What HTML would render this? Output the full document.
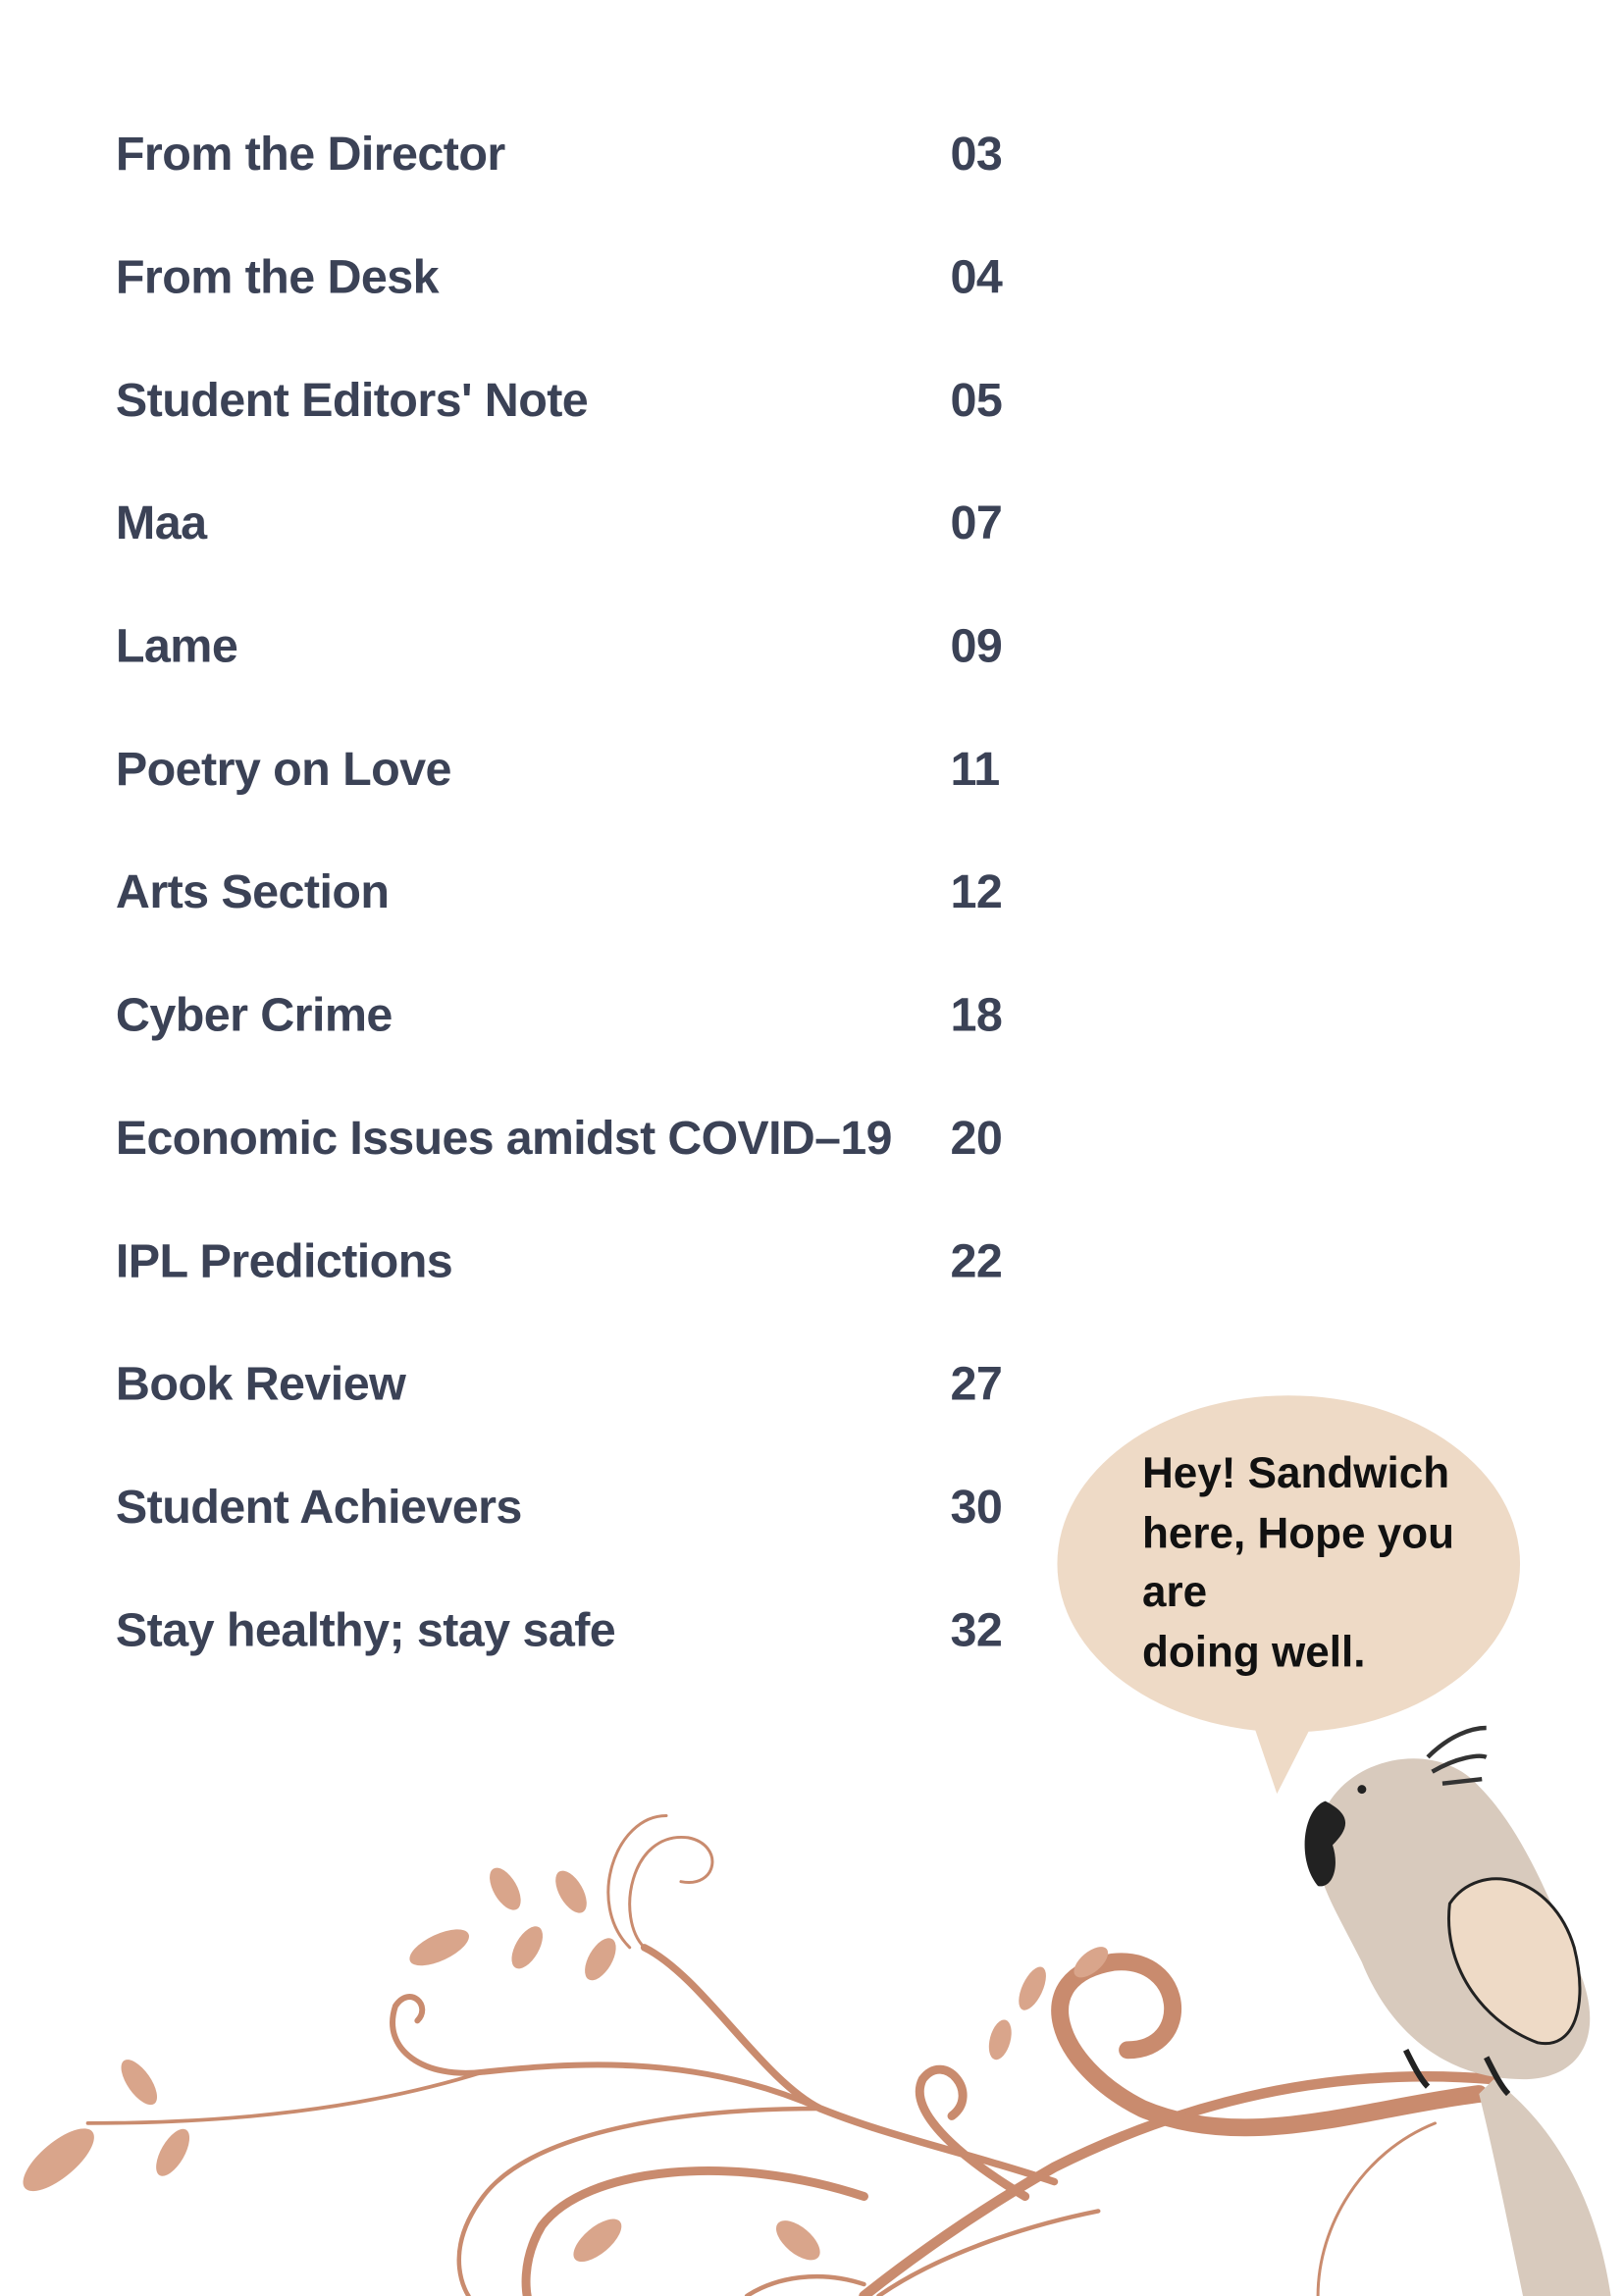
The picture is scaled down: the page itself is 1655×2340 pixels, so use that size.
<!DOCTYPE html>
<html><head><meta charset="utf-8"><style>
html,body{margin:0;padding:0;background:#fff;}
svg{display:block}
</style></head><body>
<svg width="1655" height="2340" viewBox="0 0 1109 1568" xmlns="http://www.w3.org/2000/svg">
<rect width="1109" height="1568" fill="#fff"/>
<g font-family="Liberation Sans, sans-serif" font-size="32.5" fill="#3b4256" font-weight="bold" style="letter-spacing:-0.4px">
<text x="79" y="116">From the Director</text><text x="649" y="116">03</text>
<text x="79" y="200">From the Desk</text><text x="649" y="200">04</text>
<text x="79" y="284">Student Editors' Note</text><text x="649" y="284">05</text>
<text x="79" y="368">Maa</text><text x="649" y="368">07</text>
<text x="79" y="452">Lame</text><text x="649" y="452">09</text>
<text x="79" y="536">Poetry on Love</text><text x="649" y="536">11</text>
<text x="79" y="620">Arts Section</text><text x="649" y="620">12</text>
<text x="79" y="704">Cyber Crime</text><text x="649" y="704">18</text>
<text x="79" y="788" textLength="530" lengthAdjust="spacingAndGlyphs">Economic Issues  amidst COVID–19</text><text x="649" y="788">20</text>
<text x="79" y="872">IPL Predictions</text><text x="649" y="872">22</text>
<text x="79" y="956">Book Review</text><text x="649" y="956">27</text>
<text x="79" y="1040">Student Achievers</text><text x="649" y="1040">30</text>
<text x="79" y="1124">Stay healthy; stay safe</text><text x="649" y="1124">32</text>
</g>
<!-- bubble -->
<ellipse cx="880" cy="1068" rx="158" ry="115" fill="#eedac6"/>
<path d="M855 1175 L872 1225 L900 1170 Z" fill="#eedac6"/>
<g font-family="Liberation Sans, sans-serif" font-size="29.5" font-weight="bold" fill="#111">
<text x="780" y="1016">Hey! Sandwich</text>
<text x="780" y="1057">here, Hope you</text>
<text x="780" y="1097">are</text>
<text x="780" y="1138">doing well.</text>
</g>
<!-- vines -->
<g fill="none" stroke="#c98b6e" stroke-linecap="round">
<path d="M1020 1420 C900 1410 800 1440 720 1480 C650 1520 600 1560 590 1568" stroke-width="7"/>
<path d="M1010 1430 C930 1440 850 1470 780 1440 C720 1410 700 1350 760 1340 C810 1335 815 1400 770 1400" stroke-width="12"/>
<path d="M720 1490 C660 1470 610 1460 560 1440 C520 1420 480 1350 440 1330" stroke-width="5"/>
<path d="M440 1330 C420 1310 430 1250 470 1255 C495 1260 490 1290 465 1285" stroke-width="2"/>
<path d="M430 1330 C400 1300 420 1240 455 1240" stroke-width="2"/>
<path d="M560 1440 C470 1400 380 1410 330 1415 C290 1420 260 1400 270 1370 C280 1355 295 1370 285 1380" stroke-width="4"/>
<path d="M330 1415 C250 1440 160 1450 60 1450" stroke-width="2.5"/>
<path d="M560 1440 C450 1440 360 1460 330 1500 C300 1540 320 1568 320 1568" stroke-width="3"/>
<path d="M590 1500 C500 1470 400 1480 370 1520 C355 1545 360 1568 360 1568" stroke-width="6"/>
<path d="M700 1500 C650 1470 620 1440 630 1420 C645 1400 670 1430 650 1445" stroke-width="6"/>
<path d="M600 1568 C640 1540 700 1520 750 1510" stroke-width="3"/>
<path d="M900 1568 C900 1520 930 1470 980 1450" stroke-width="2"/>
<path d="M510 1568 C530 1555 560 1550 590 1560" stroke-width="3"/>
</g>
<g fill="#d9a58b">
<ellipse cx="300" cy="1330" rx="22" ry="9" transform="rotate(-25 300 1330)"/>
<ellipse cx="345" cy="1290" rx="16" ry="8" transform="rotate(60 345 1290)"/>
<ellipse cx="390" cy="1292" rx="16" ry="8" transform="rotate(60 390 1292)"/>
<ellipse cx="360" cy="1330" rx="16" ry="8" transform="rotate(-60 360 1330)"/>
<ellipse cx="410" cy="1338" rx="16" ry="8" transform="rotate(-60 410 1338)"/>
<ellipse cx="40" cy="1475" rx="30" ry="12" transform="rotate(-40 40 1475)"/>
<ellipse cx="95" cy="1422" rx="18" ry="8" transform="rotate(55 95 1422)"/>
<ellipse cx="118" cy="1470" rx="18" ry="8" transform="rotate(-60 118 1470)"/>
<ellipse cx="705" cy="1358" rx="16" ry="7" transform="rotate(-65 705 1358)"/>
<ellipse cx="745" cy="1340" rx="14" ry="7" transform="rotate(-40 745 1340)"/>
<ellipse cx="683" cy="1393" rx="14" ry="7" transform="rotate(-75 683 1393)"/>
<ellipse cx="408" cy="1530" rx="20" ry="9" transform="rotate(-40 408 1530)"/>
<ellipse cx="545" cy="1530" rx="18" ry="9" transform="rotate(40 545 1530)"/>
</g>
<!-- bird -->
<g>
<path d="M1020 1420 C1060 1450 1090 1500 1100 1568 L1040 1568 C1030 1520 1020 1470 1010 1430 Z" fill="#d8cabd"/>
<path d="M900 1250 C910 1200 980 1185 1010 1220 C1040 1250 1060 1300 1080 1350 C1095 1390 1080 1420 1040 1420 C990 1420 950 1390 930 1340 C910 1300 895 1280 900 1250 Z" fill="#d8cabd"/>
<path d="M990 1300 C1010 1270 1060 1280 1075 1330 C1085 1370 1075 1400 1050 1395 C1010 1380 985 1340 990 1300 Z" fill="#eedac6" stroke="#222" stroke-width="2"/>
<path d="M905 1230 C890 1235 885 1270 900 1288 C910 1290 915 1275 910 1260 C920 1250 925 1240 905 1230 Z" fill="#222"/>
<circle cx="930" cy="1222" r="3" fill="#222"/>
<path d="M975 1200 C990 1185 1005 1180 1015 1180 M978 1210 C995 1200 1010 1198 1015 1200 M985 1218 L1012 1215" stroke="#333" stroke-width="3" fill="none"/>
<path d="M960 1400 C965 1410 970 1420 975 1425 M1015 1405 C1020 1415 1025 1425 1030 1430" stroke="#222" stroke-width="4" fill="none"/>
</g>
</svg>
</body></html>
